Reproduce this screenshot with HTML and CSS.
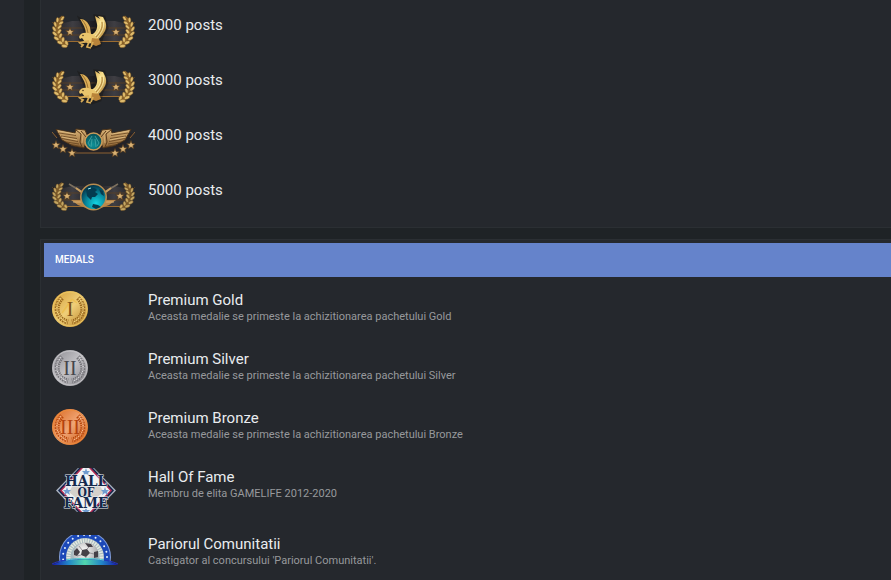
FILE: index.html
```html
<!DOCTYPE html>
<html lang="ro">
<head>
    <meta charset="UTF-8">
    <meta name="viewport" content="width=device-width, initial-scale=1.0">
    <title>Medals</title>
    <link rel="stylesheet" href="styles.css">
</head>
<body>
    <!-- shared shapes -->
    <svg class="defs" width="0" height="0" aria-hidden="true">
        <defs>
            <linearGradient id="gold" x1="0" y1="0" x2="1" y2="1">
                <stop offset="0" stop-color="#c18b38"/>
                <stop offset=".45" stop-color="#f9e08c"/>
                <stop offset="1" stop-color="#a06d24"/>
            </linearGradient>
            <linearGradient id="bronzeWing" x1="0" y1="0" x2="0" y2="1">
                <stop offset="0" stop-color="#d9b276"/>
                <stop offset="1" stop-color="#8f6535"/>
            </linearGradient>
            <linearGradient id="plateFill">
                <stop offset="0" stop-color="#201f23"/>
                <stop offset=".25" stop-color="#3f3e43"/>
                <stop offset=".5" stop-color="#1d1c20"/>
                <stop offset=".75" stop-color="#3f3e43"/>
                <stop offset="1" stop-color="#201f23"/>
            </linearGradient>
            <radialGradient id="teal" cx=".45" cy=".7" r=".7">
                <stop offset="0" stop-color="#0f9298"/>
                <stop offset="1" stop-color="#064c55"/>
            </radialGradient>
            <radialGradient id="globe" cx=".6" cy=".75" r=".75">
                <stop offset="0" stop-color="#12d5e4"/>
                <stop offset=".5" stop-color="#078ba0"/>
                <stop offset="1" stop-color="#032c42"/>
            </radialGradient>
            <linearGradient id="coinGold" x1="0" y1="0" x2="1" y2="1">
                <stop offset="0" stop-color="#d19a35"/>
                <stop offset=".5" stop-color="#efce78"/>
                <stop offset="1" stop-color="#b47b22"/>
            </linearGradient>
            <linearGradient id="coinSilver" x1="0" y1="0" x2="1" y2="1">
                <stop offset="0" stop-color="#8b8a8f"/>
                <stop offset=".5" stop-color="#c3c2c6"/>
                <stop offset="1" stop-color="#7f7e83"/>
            </linearGradient>
            <linearGradient id="coinBronze" x1="0" y1="0" x2="1" y2="1">
                <stop offset="0" stop-color="#d8661d"/>
                <stop offset=".5" stop-color="#f0a574"/>
                <stop offset="1" stop-color="#c9520c"/>
            </linearGradient>
            <linearGradient id="grass">
                <stop offset="0" stop-color="#1414a8"/>
                <stop offset=".25" stop-color="#2387c8"/>
                <stop offset=".5" stop-color="#52d8ae"/>
                <stop offset=".75" stop-color="#2387c8"/>
                <stop offset="1" stop-color="#1414a8"/>
            </linearGradient>
            <radialGradient id="ball" cx=".4" cy=".35" r=".7">
                <stop offset="0" stop-color="#ffffff"/>
                <stop offset="1" stop-color="#9b9a9c"/>
            </radialGradient>

            <path id="star" d="M0-4.4 1.2-1.4 4.3-1.3 1.9.7 2.7 3.8 0 2 -2.7 3.8-1.9.7-4.3-1.3-1.2-1.4Z" fill="#d9b172" stroke="#4c361d" stroke-width=".8"/>

            <g id="laurel">
                <path d="M11 3C3 8 2 22 15 32" fill="none" stroke="#8a6229" stroke-width="3.500"/>
                <g fill="#dfbc6c" stroke="#7b5420" stroke-width=".5">
                    <ellipse cx="10.400" cy="4.500" rx="1.300" ry="2.600" transform="rotate(35 10.400 4.500)"/>
                    <ellipse cx="5.500" cy="6" rx="1.400" ry="2.600" transform="rotate(5 5.500 6)"/>
                    <ellipse cx="9" cy="9" rx="1.400" ry="2.600" transform="rotate(55 9 9)"/>
                    <ellipse cx="3.300" cy="10.500" rx="1.400" ry="2.800" transform="rotate(-15 3.300 10.500)"/>
                    <ellipse cx="7.500" cy="13" rx="1.400" ry="2.700" transform="rotate(45 7.500 13)"/>
                    <ellipse cx="2.300" cy="15" rx="1.400" ry="2.800" transform="rotate(-30 2.300 15)"/>
                    <ellipse cx="7.300" cy="17.500" rx="1.500" ry="2.700" transform="rotate(35 7.300 17.500)"/>
                    <ellipse cx="2.800" cy="19.800" rx="1.500" ry="2.900" transform="rotate(-45 2.800 19.800)"/>
                    <ellipse cx="8.500" cy="21.800" rx="1.500" ry="2.700" transform="rotate(20 8.500 21.800)"/>
                    <ellipse cx="4.500" cy="24.500" rx="1.600" ry="3" transform="rotate(-58 4.500 24.500)"/>
                    <ellipse cx="11" cy="25.700" rx="1.500" ry="2.700" transform="rotate(5 11 25.700)"/>
                    <ellipse cx="8" cy="28.600" rx="1.600" ry="3" transform="rotate(-68 8 28.600)"/>
                    <ellipse cx="14.500" cy="29" rx="1.600" ry="2.600" transform="rotate(-20 14.500 29)"/>
                    <ellipse cx="12.500" cy="32" rx="1.600" ry="3" transform="rotate(-85 12.500 32)"/>
                </g>
            </g>

            <g id="plate">
                <path d="M0 8 12 9 20 7H63L71 9 83 8 80 15 71 27H12L3 15Z" fill="url(#plateFill)"/>
                <path d="M0 8 3 11M83 8 80 11M8 14H75M8 21H75" fill="none" stroke="#5d4324" stroke-width=".8"/>
                <path d="M12 27.500H71" stroke="#9a6b30"/>
            </g>

            <g id="eagle">
                <path d="M28 5 35 9 39 19 45 13 43 2 52 3 55 14 50 23 48 31 40 34 30 31 28 24 34 19Z" fill="#17140f" stroke="#17140f" stroke-width="3" opacity=".4"/>
                <path d="M28 5C33 5 36 8 38 13L39 20 34 21C34 14 31 10 28 5Z" fill="#dcaf58"/>
                <path d="M30 6C33 9 35 13 36 19" fill="none" stroke="#8d6326" stroke-width=".8"/>
                <path d="M43 2 48 5 46 2 51 3 53 7C55 11 54 15 53 17 50 22 48 25 43 27L37 22C43 20 46 15 45 10Z" fill="url(#gold)"/>
                <path d="M48 7C50 12 48 17 43 22M51 6C53 13 50 18 45 24" fill="none" stroke="#fff0ae" stroke-width=".8"/>
                <path d="M50 8C51 14 48 19 44 23" fill="none" stroke="#9a6a27" stroke-width=".7"/>
                <path d="M27 23C28 19 32 18 36 19 41 20 45 23 45 26 43 30 37 30 33 28L30 24 28 25Z" fill="#eac56c"/>
                <path d="M40 24 47 25 49 30 44 32 39 30Z" fill="#b9843a"/>
                <path d="M37 27 32 28 28 29 31 31 29 33M37 28 35 33 39 34M41 28 39 33" fill="none" stroke="#d9ad58" stroke-width="1.800"/>
                <circle cx="31" cy="21.500" r=".7" fill="#38230d"/>
            </g>

            <g id="wing">
                <path d="M4 5.500 23 9 24 5 33 6 36 13 32 24 20 21.500 10 16Z" fill="url(#bronzeWing)" stroke="#4b3218"/>
                <path d="M7 9 24 11.500M9 12 25 14.500M10 14.500 26 17.500M14 18 27 20M19 20.500 29 22.500" fill="none" stroke="#65431f" stroke-width=".8"/>
                <path d="M6 6.500 23 10M10 13 25 16" fill="none" stroke="#efcf94" stroke-width=".6"/>
                <path d="M24 6 29 10 28 18 30 23M29 7 34 13" fill="none" stroke="#5b3c1c"/>
                <path d="M26 6 31 11 30 19" fill="none" stroke="#dbb679" stroke-width=".8"/>
            </g>

            <symbol id="rank-eagle" viewBox="0 0 83 36">
                <use href="#plate"/>
                <use href="#laurel"/>
                <use href="#laurel" transform="matrix(-1 0 0 1 83 0)"/>
                <use href="#star" x="18" y="18"/>
                <use href="#star" x="64" y="18"/>
                <use href="#eagle"/>
            </symbol>
        </defs>
    </svg>

    <main class="page">
        <section class="panel panel-ranks" aria-label="Ranks">
            <ul class="award-list">
                <li class="award">
                    <svg class="rank-icon" viewBox="0 0 83 36" aria-hidden="true"><use href="#rank-eagle"/></svg>
                    <div class="award-text"><h3>2000 posts</h3></div>
                </li>
                <li class="award">
                    <svg class="rank-icon" viewBox="0 0 83 36" aria-hidden="true"><use href="#rank-eagle"/></svg>
                    <div class="award-text"><h3>3000 posts</h3></div>
                </li>
                <li class="award">
                    <svg class="rank-icon" viewBox="0 0 83 36" aria-hidden="true">
                        <path d="M1 9 14 27 24 29H59L69 27 82 9Z" fill="#242226"/>
                        <path d="M0 8 5 14M83 8 78 14M20 29H63" stroke="#8c6032"/>
                        <use href="#wing"/>
                        <use href="#wing" transform="matrix(-1 0 0 1 83 0)"/>
                        <circle cx="41.500" cy="17.500" r="8.500" fill="url(#teal)" stroke="#c99b5a" stroke-width="1.500"/>
                        <path d="M40 12 36 19 38 22M43 12 47 19 45 22M40 15 39 23M43 15 44 23" fill="none" stroke="#45aaa9" stroke-width=".8"/>
                        <g transform="translate(0 1)">
                            <use href="#star" x="4" y="20"/>
                            <use href="#star" x="11" y="24"/>
                            <use href="#star" x="20" y="28"/>
                            <use href="#star" x="63" y="28"/>
                            <use href="#star" x="71" y="24"/>
                            <use href="#star" x="79" y="20"/>
                        </g>
                    </svg>
                    <div class="award-text"><h3>4000 posts</h3></div>
                </li>
                <li class="award">
                    <svg class="rank-icon" viewBox="0 0 83 36" aria-hidden="true">
                        <use href="#plate"/>
                        <path d="M17 5 32 14M66 5 51 14" stroke="#7b6f5e" stroke-width="1.500"/>
                        <path d="M24 9 32 15M59 9 51 15" stroke="#c9a063" stroke-width="2"/>
                        <path d="M19 21H30L34 29 26 26ZM64 21H53L49 29 57 26Z" fill="#b8874a"/>
                        <path d="M21 23H30M62 23H53" stroke="#e2bd80" stroke-width=".8"/>
                        <g opacity=".85">
                            <use href="#laurel" transform="matrix(.95 0 0 .88 0 2)"/>
                            <use href="#laurel" transform="matrix(-.95 0 0 .88 83 2)"/>
                        </g>
                        <use href="#star" x="15" y="17"/>
                        <use href="#star" x="68" y="17"/>
                        <circle cx="41.500" cy="18" r="12.700" fill="url(#globe)" stroke="#b98d50" stroke-width="1.600"/>
                        <path d="M34 11C38 8 43 8 45 11L43 13 46 15 43 18 40 18 39 21 35 17ZM47 10 51 12 52 17 49 15ZM41 25 46 26 49 28 44 30 40 28Z" fill="#043b50"/>
                        <path d="M36 10 39 9" stroke="#9ce6ec"/>
                    </svg>
                    <div class="award-text"><h3>5000 posts</h3></div>
                </li>
            </ul>
        </section>

        <section class="panel panel-medals">
            <h2 class="panel-title">Medals</h2>
            <ul class="award-list">
                <li class="award">
                    <svg class="medal-icon" viewBox="0 0 36 36" aria-hidden="true">
                        <circle cx="18" cy="18" r="18" fill="url(#coinGold)"/>
                        <circle cx="18" cy="18" r="17" fill="none" stroke="#edc863"/>
                        <path d="M10 7C2 15 4 28 16 31M26 7C34 15 32 28 20 31" fill="none" stroke="#99671e" stroke-width="5" stroke-dasharray="1.500 1"/>
                        <path d="M9 7C2 15 4 27 15 31M27 7C34 15 32 27 21 31" fill="none" stroke="#f6db88" stroke-width="1.500" stroke-dasharray="1 1.500"/>
                        <path d="M10 22 20 8M20 8 25 12" stroke="#efbc3f" stroke-width="1.500" opacity=".6"/>
                        <text class="numeral numeral-gold" x="18" y="25">I</text>
                    </svg>
                    <div class="award-text">
                        <h3>Premium Gold</h3>
                        <p>Aceasta medalie se primeste la achizitionarea pachetului Gold</p>
                    </div>
                </li>
                <li class="award">
                    <svg class="medal-icon" viewBox="0 0 36 36" aria-hidden="true">
                        <circle cx="18" cy="18" r="18" fill="url(#coinSilver)"/>
                        <circle cx="18" cy="18" r="17" fill="none" stroke="#c6c5c9"/>
                        <path d="M10 7C2 15 4 28 16 31M26 7C34 15 32 28 20 31" fill="none" stroke="#747378" stroke-width="5" stroke-dasharray="1.500 1"/>
                        <path d="M9 7C2 15 4 27 15 31M27 7C34 15 32 27 21 31" fill="none" stroke="#dddce0" stroke-width="1.500" stroke-dasharray="1 1.500"/>
                        <text class="numeral numeral-silver" x="18" y="25">II</text>
                    </svg>
                    <div class="award-text">
                        <h3>Premium Silver</h3>
                        <p>Aceasta medalie se primeste la achizitionarea pachetului Silver</p>
                    </div>
                </li>
                <li class="award">
                    <svg class="medal-icon" viewBox="0 0 36 36" aria-hidden="true">
                        <circle cx="18" cy="18" r="18" fill="url(#coinBronze)"/>
                        <circle cx="18" cy="18" r="17" fill="none" stroke="#ee8d3c"/>
                        <path d="M10 7C2 15 4 28 16 31M26 7C34 15 32 28 20 31" fill="none" stroke="#b9480d" stroke-width="5" stroke-dasharray="1.500 1"/>
                        <path d="M9 7C2 15 4 27 15 31M27 7C34 15 32 27 21 31" fill="none" stroke="#ffc295" stroke-width="1.500" stroke-dasharray="1 1.500"/>
                        <text class="numeral numeral-bronze" x="18" y="25">III</text>
                    </svg>
                    <div class="award-text">
                        <h3>Premium Bronze</h3>
                        <p>Aceasta medalie se primeste la achizitionarea pachetului Bronze</p>
                    </div>
                </li>
                <li class="award">
                    <svg class="fame-icon" viewBox="0 0 60 44" aria-hidden="true">
                        <path d="M22 0H38L60 22.500 38 45H22L0 22.500Z" fill="#a9b1c0"/>
                        <path d="M23 0H37L58 22.500 37 45H23L2 22.500Z" fill="#14264a"/>
                        <path d="M25 0H35L56 22.500 35 45H25L4 22.500Z" fill="#b32850"/>
                        <path d="M27 0H33L54 22.500 33 45H27L6 22.500Z" fill="#f1f2f3"/>
                        <path d="M17 17H43L48 24 40 30H20L13 24Z" fill="#d4d0cb"/>
                        <g fill="#6f9bd0">
                            <path d="M30 0 31 3H34L32 5 33 7 30 6 27 7 28 5 26 3H29ZM11 19 12 22H15L13 24 14 27 11 25 8 27 9 24 7 22H10ZM49 19 50 22H53L51 24 52 27 49 25 46 27 47 24 45 22H48ZM30 40 31 42H34L32 44 30 45 28 44 26 42H29Z"/>
                        </g>
                        <text class="fame-word"><tspan x="30" y="18">HALL</tspan><tspan class="fame-word-small" x="30" y="29">OF</tspan><tspan x="30" y="40">FAME</tspan></text>
                    </svg>
                    <div class="award-text">
                        <h3>Hall Of Fame</h3>
                        <p>Membru de elita GAMELIFE 2012-2020</p>
                    </div>
                </li>
                <li class="award">
                    <svg class="ball-icon" viewBox="0 0 66 30" aria-hidden="true">
                        <circle cx="33" cy="22" r="26" fill="#7f9bd8"/>
                        <circle cx="33" cy="22" r="25" fill="#1c49b8"/>
                        <circle cx="33" cy="22" r="22" fill="none" stroke="#e6f3ff" stroke-width="2" stroke-linecap="round" stroke-dasharray="0 6"/>
                        <circle cx="33" cy="22" r="19" fill="#a9bac0"/>
                        <circle cx="33" cy="22" r="16.500" fill="none" stroke="#e3e9df" stroke-width="4" stroke-dasharray="1.500 1"/>
                        <circle cx="34" cy="20" r="12.500" fill="url(#ball)"/>
                        <path d="M30 15 35 14 38 18 34 22 29 20ZM33 8 39 9 41 12 36 12ZM22 16 25 13 28 17 25 21 22 20ZM42 17 46 16 46 22 42 23ZM27 23 31 25 29 27 25 25Z" fill="#454047"/>
                        <path d="M30 15 27 11M35 14 37 12M38 18 42 19M34 22 33 25M29 20 25 21" stroke="#77737a" stroke-width=".7"/>
                        <path d="M0 30C12 22 54 22 66 30Z" fill="url(#grass)"/>
                        <path d="M0 29C12 22 54 22 66 29" fill="none" stroke="#2635b8" stroke-width="1"/>
                        <path d="M14 25C26 23 40 23 52 25" fill="none" stroke="#67e5d5"/>
                    </svg>
                    <div class="award-text">
                        <h3>Pariorul Comunitatii</h3>
                        <p>Castigator al concursului 'Pariorul Comunitatii'.</p>
                    </div>
                </li>
            </ul>
        </section>
    </main>
</body>
</html>
```
FILE: styles.css
```css
* {
    box-sizing: border-box;
}
body {
    margin: 0;
    padding-left: 24px;
    background: #25282d;
    color: #e9ecef;
    font-family: Roboto, "Liberation Sans", sans-serif;
}
h2, h3, p, ul {
    margin: 0;
    padding: 0;
}
.defs {
    position: absolute;
}
.page {
    display: flex;
    flex-direction: column;
    gap: 11px;
    min-height: 100vh;
    padding-left: 16px;
    background: #1f2326;
}
.panel {
    padding: 3px 0 3px 3px;
    background: #25282d;
    border: 1px solid #2b2f33;
    border-right: none;
}
.panel-ranks {
    padding-top: 0;
    border-top: none;
}
.panel-medals {
    flex: 1;
    padding-bottom: 0;
    border-bottom: none;
}
.panel-title {
    padding: 0 11px;
    background: #6583cb;
    color: #fff;
    font-size: 10px;
    font-weight: 500;
    line-height: 34px;
    text-transform: uppercase;
}
.award-list {
    display: flex;
    flex-direction: column;
    gap: 19px;
    padding: 14px 8px 9px;
    list-style: none;
}
.panel-medals .award-list {
    gap: 23px;
}
.award {
    display: grid;
    grid-template-columns: 96px 1fr;
    align-items: start;
}
.award svg {
    display: block;
}
.award h3 {
    font-size: 15px;
    font-weight: 400;
    line-height: 18px;
}
.panel-ranks h3 {
    line-height: 22px;
}
.award p {
    color: #97999c;
    font-size: 11px;
    line-height: 16px;
}
.rank-icon {
    width: 83px;
    height: 36px;
}
.medal-icon {
    width: 36px;
    height: 36px;
}
.fame-icon {
    width: 60px;
    height: 44px;
    margin-left: 4px;
}
.ball-icon {
    width: 66px;
    height: 30px;
}
.numeral {
    font-family: "Liberation Serif", serif;
    font-size: 20px;
    text-anchor: middle;
}
.numeral-gold {
    fill: #7b5118;
}
.numeral-silver {
    fill: #45454a;
}
.numeral-bronze {
    fill: #b4420d;
}
.fame-word {
    fill: #14284c;
    stroke: #e9edf2;
    stroke-width: 1px;
    paint-order: stroke;
    font-family: "DejaVu Serif Condensed", "DejaVu Serif", serif;
    font-size: 15px;
    font-weight: 700;
    text-anchor: middle;
}
.fame-word-small {
    font-size: 12px;
}
```
